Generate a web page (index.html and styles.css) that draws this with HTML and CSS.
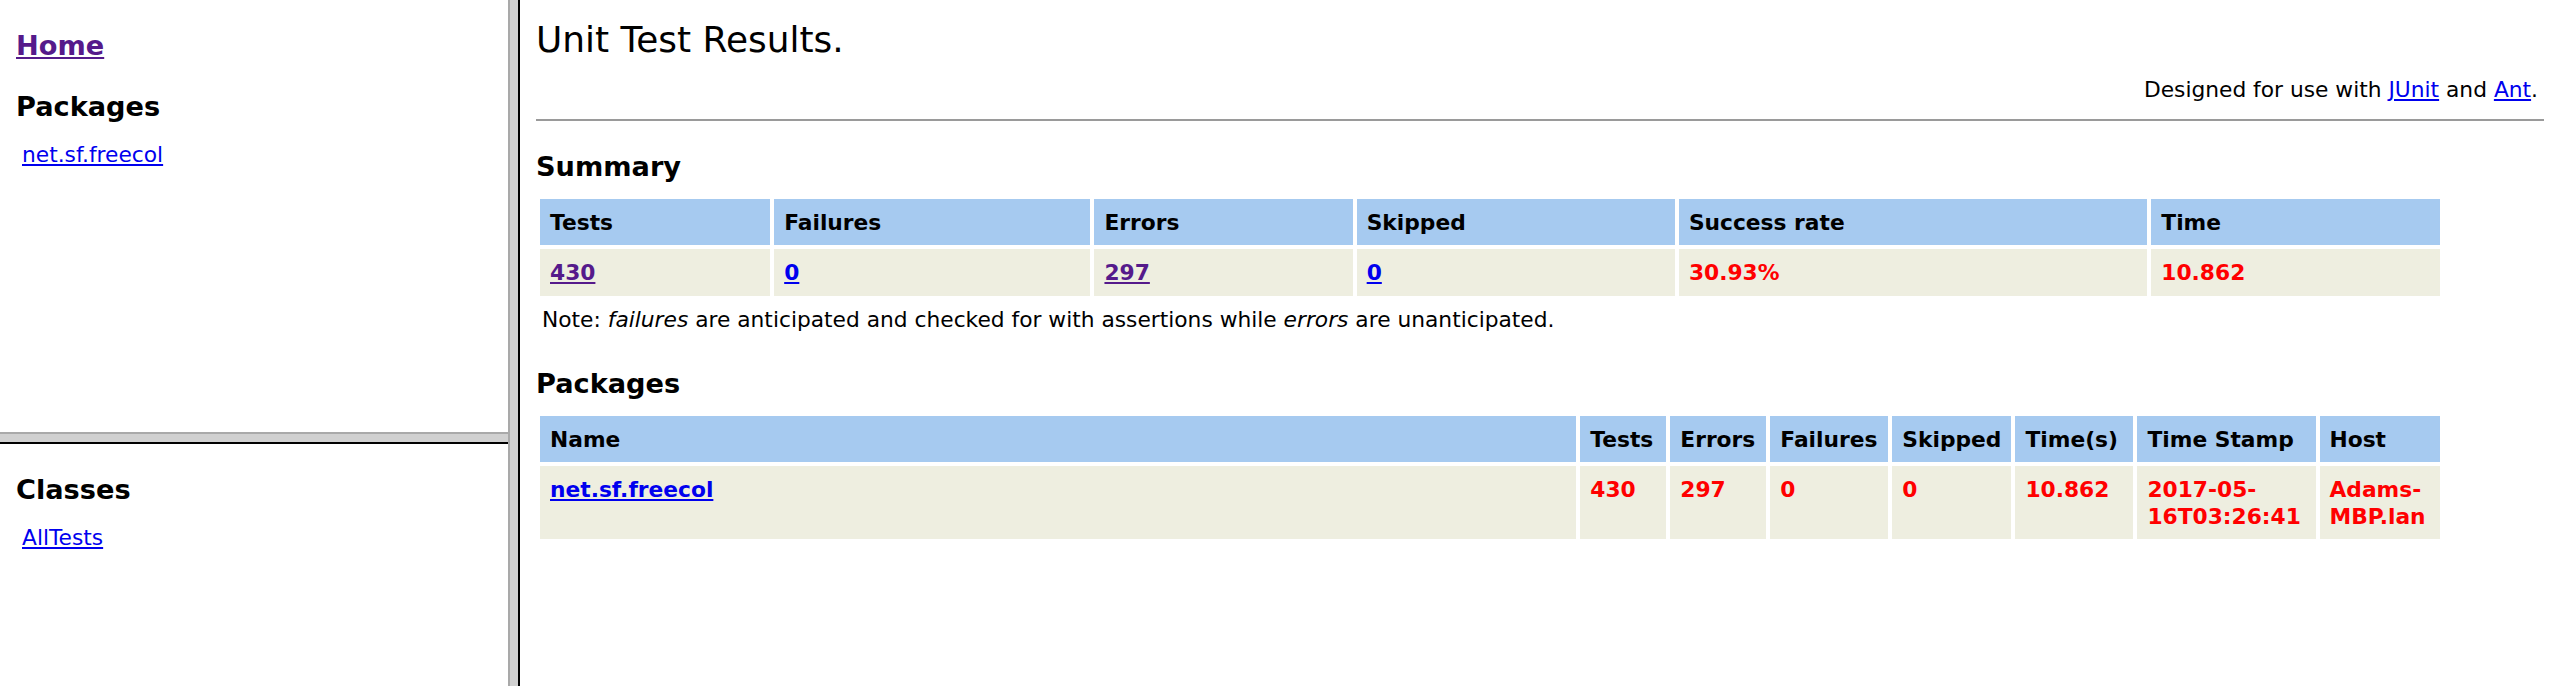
FILE: index.html
```html
<!DOCTYPE html>
<html lang="en">
<head>
<meta charset="utf-8">
<title>Unit Test Results.</title>
<link rel="stylesheet" href="styles.css">
</head>
<body>
<div class="frameset">
  <div class="sidebar">
    <div class="pane pane-top">
      <div class="doc">
        <h2 class="nav-title"><a class="visited" href="#">Home</a></h2>
        <h2 class="nav-title">Packages</h2>
        <table class="nav-list"><tr><td><a href="#">net.sf.freecol</a></td></tr></table>
      </div>
    </div>
    <div class="hsplit"></div>
    <div class="pane pane-bottom">
      <div class="doc">
        <h2 class="nav-title">Classes</h2>
        <table class="nav-list"><tr><td><a href="#">AllTests</a></td></tr></table>
      </div>
    </div>
  </div>
  <div class="vsplit"></div>
  <div class="pane main">
    <div class="doc">
      <h1 class="page-title">Unit Test Results.</h1>
      <table class="banner"><tr><td class="banner-left"></td><td class="banner-right">Designed for use with <a href="#">JUnit</a> and <a href="#">Ant</a>.</td></tr></table>
      <hr class="rule">
      <h2 class="section-title">Summary</h2>
      <table class="details">
        <tr>
          <th class="s-tests">Tests</th>
          <th class="s-fail">Failures</th>
          <th class="s-err">Errors</th>
          <th class="s-skip">Skipped</th>
          <th class="s-rate">Success rate</th>
          <th class="s-time">Time</th>
        </tr>
        <tr class="Error">
          <td><a class="visited" href="#">430</a></td>
          <td><a href="#">0</a></td>
          <td><a class="visited" href="#">297</a></td>
          <td><a href="#">0</a></td>
          <td>30.93%</td>
          <td>10.862</td>
        </tr>
      </table>
      <table class="note"><tr><td>Note: <em>failures</em> are anticipated and checked for with assertions while <em>errors</em> are unanticipated.</td></tr></table>
      <h2 class="section-title">Packages</h2>
      <table class="details">
        <tr>
          <th class="p-name">Name</th>
          <th class="p-tests">Tests</th>
          <th class="p-err">Errors</th>
          <th class="p-fail">Failures</th>
          <th class="p-skip">Skipped</th>
          <th class="p-time">Time(s)</th>
          <th class="p-stamp">Time Stamp</th>
          <th class="p-host">Host</th>
        </tr>
        <tr class="Error">
          <td><a href="#">net.sf.freecol</a></td>
          <td>430</td>
          <td>297</td>
          <td>0</td>
          <td>0</td>
          <td>10.862</td>
          <td>2017-05-16T03:26:41</td>
          <td>Adams-MBP.lan</td>
        </tr>
      </table>
    </div>
  </div>
</div>
</body>
</html>
```
FILE: styles.css
```css
html, body {
  margin: 0;
  padding: 0;
  background: #ffffff;
}

body {
  font-family: "DejaVu Sans", Verdana, "Liberation Sans", sans-serif;
  font-size: 21.76px;
  line-height: 1.215;
  color: #000000;
}

a {
  color: #0000ee;
  text-decoration: underline;
}

a.visited {
  color: #551a8b;
}

.frameset {
  display: flex;
  height: 686px;
  width: 2560px;
}

.sidebar {
  width: 508px;
  flex: 0 0 508px;
  display: flex;
  flex-direction: column;
}

.pane {
  overflow: hidden;
  background: #ffffff;
}

.pane-top {
  height: 432px;
  flex: 0 0 432px;
}

.pane-bottom {
  flex: 1 1 auto;
}

.main {
  flex: 1 1 auto;
}

.doc {
  margin: 16px;
}

.hsplit {
  flex: 0 0 auto;
  height: 8px;
  background: #d0d0d0;
  border-top: 2px solid #a9a9a9;
  border-bottom: 2px solid #000000;
}

.vsplit {
  flex: 0 0 8px;
  width: 8px;
  background: #d0d0d0;
  border-left: 2px solid #a9a9a9;
  border-right: 2px solid #000000;
}

.nav-title,
.section-title {
  font-size: 27.2px;
  font-weight: bold;
  line-height: 1.215;
  margin: 28.6px 0 12.2px;
}

.nav-list {
  width: 100%;
  border-spacing: 4px;
  font-size: 21.76px;
}

.nav-list td {
  padding: 3px 2px 1px;
  white-space: nowrap;
}

.page-title {
  font-size: 35.9px;
  font-weight: normal;
  line-height: 1.215;
  padding-top: 2px;
  margin: 0 0 8px;
}

.banner {
  width: 100%;
  border-spacing: 4px;
  font-size: 21.76px;
}

.banner td {
  padding: 3px 2px 1px;
}

.banner-right {
  text-align: right;
}

.rule {
  border: 0;
  height: 2px;
  background: #9a9a9a;
  margin: 10.88px 0;
}

.details {
  width: 95%;
  border-spacing: 4px;
  font-size: 21.76px;
}

.details th,
.details td {
  padding: 11px 10px 9px;
  text-align: left;
  vertical-align: top;
}

.details th {
  font-weight: bold;
  background: #a6caf0;
}

.details td {
  background: #eeeee0;
}

.Error td {
  font-weight: bold;
  color: #ff0000;
}

.s-tests { width: 210px; }
.s-fail { width: 296px; }
.s-err { width: 238px; }
.s-skip { width: 298px; }
.s-rate { width: 448px; }
.s-time { width: 268px; }

.p-name { width: 1016px; }
.p-tests { width: 66px; }
.p-err { width: 76px; }
.p-fail { width: 98px; }
.p-skip { width: 98px; }
.p-time { width: 98px; }
.p-stamp { width: 158px; }
.p-host { width: 100px; }

.note {
  width: 95%;
  border-spacing: 4px;
  font-size: 21.76px;
}

.note td {
  padding: 3px 2px 1px;
  text-align: justify;
}
```
